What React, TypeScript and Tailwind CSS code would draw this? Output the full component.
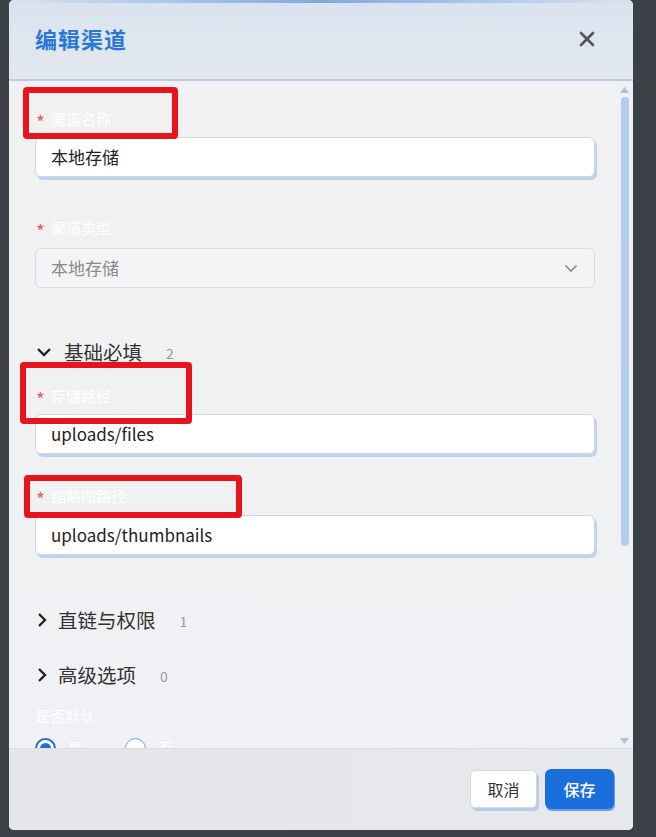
import React from 'react';

const font = { fontFamily: '"Noto Sans CJK SC", "Noto Sans", sans-serif' };

function FieldLabel({ text, className = '' }: { text: string; className?: string }) {
  return (
    <div className={`flex items-center h-[22px] pl-[1px] ${className}`}>
      <span className="text-[#f2555a] text-[19px] leading-none mt-[7px] mr-[6px]">*</span>
      <span className="text-white text-[15px] leading-none">{text}</span>
    </div>
  );
}

function TextInput({ value, className = '' }: { value: string; className?: string }) {
  return (
    <div
      className={`h-[40px] w-[560px] flex items-center pl-[15px] bg-white border border-[#d3d6db] rounded-[6px] shadow-[2px_3px_0_#bcd2ee] text-[17px] text-[#222] ${className}`}
    >
      {value}
    </div>
  );
}

function Section({ title, count, open, className = '' }: { title: string; count: number; open?: boolean; className?: string }) {
  return (
    <div className={`flex items-center h-[24px] pl-[1px] ${className}`}>
      {open ? (
        <svg width="16" height="12" viewBox="0 0 16 12" className="mr-[12px]">
          <path d="M2 3 L8 9 L14 3" fill="none" stroke="#222" strokeWidth="2.4" />
        </svg>
      ) : (
        <svg width="12" height="16" viewBox="0 0 12 16" className="mr-[10px]">
          <path d="M3 2 L9 8 L3 14" fill="none" stroke="#222" strokeWidth="2.4" />
        </svg>
      )}
      <span className="text-[19.5px] text-[#333]">{title}</span>
      <span className="text-[14px] text-[#9a9a9a] ml-[24px] mt-[2px]">{count}</span>
    </div>
  );
}

export default function App() {
  return (
    <div className="relative w-[656px] h-[837px] bg-[#3c4047] overflow-hidden" style={font}>
      <div className="ml-[9px] w-[624px] h-[830px] flex flex-col rounded-[5px] overflow-hidden bg-[#f1f2f4]">
        {/* Header */}
        <div className="relative h-[81px] shrink-0 flex items-center justify-between pl-[26px] pr-[38px] pb-[2px] bg-gradient-to-b from-[#d9e3ef] to-[#e4e8ee] border-b-[2px] border-[#b4cdec]">
          <div className="absolute top-0 left-0 right-0 h-[3px] bg-gradient-to-r from-transparent via-[#7eaae0] to-transparent" />
          <span className="text-[22px] font-bold text-[#2a78d6] tracking-[1px]">编辑渠道</span>
          <svg width="16" height="16" viewBox="0 0 16 16">
            <path d="M2 2 L14 14 M14 2 L2 14" stroke="#555" strokeWidth="2.6" strokeLinecap="round" />
          </svg>
        </div>

        {/* Body */}
        <div className="flex-1 flex min-h-0 bg-gradient-to-b from-[#f1f1f2] to-[#f0f1f4]">
          <div className="flex-1 overflow-hidden pl-[26px] pt-[26px]">
            <FieldLabel text="渠道名称" />
            <TextInput value="本地存储" className="mt-[8px]" />

            <FieldLabel text="渠道类型" className="mt-[39px]" />
            <div className="mt-[10px] h-[40px] w-[560px] flex items-center justify-between pl-[15px] pr-[16px] bg-[#f3f4f6] border border-[#dadbde] rounded-[6px] text-[17px] text-[#8a8a8a]">
              <span>本地存储</span>
              <svg width="14" height="9" viewBox="0 0 14 9">
                <path d="M1.5 1.5 L7 7 L12.5 1.5" fill="none" stroke="#8f8f8f" strokeWidth="1.6" />
              </svg>
            </div>

            <Section title="基础必填" count={2} open className="mt-[52px]" />
            <FieldLabel text="存储路径" className="mt-[20px]" />
            <TextInput value="uploads/files" className="mt-[8px]" />

            <FieldLabel text="缩略图路径" className="mt-[30px]" />
            <TextInput value="uploads/thumbnails" className="mt-[9px]" />

            <Section title="直链与权限" count={1} className="mt-[53px]" />
            <Section title="高级选项" count={0} className="mt-[31px]" />

            <div className="mt-[18px] h-[22px] flex items-center text-white text-[15px]">是否默认</div>
            <div className="mt-[10px] flex items-center">
              <span className="w-[21px] h-[21px] rounded-full border-[2px] border-[#1f6fd6] bg-white flex items-center justify-center">
                <span className="w-[11px] h-[11px] rounded-full bg-[#1f6fd6]" />
              </span>
              <span className="ml-[12px] text-white text-[15px]">是</span>
              <span className="ml-[42px] w-[21px] h-[21px] rounded-full border border-[#6d9fdd] bg-white" />
              <span className="ml-[12px] text-white text-[15px]">否</span>
            </div>
          </div>

          {/* Scrollbar */}
          <div className="w-[13px] shrink-0 flex flex-col items-center pt-[6px] pb-[4px] mr-[2px]">
            <svg width="9" height="6" viewBox="0 0 9 6">
              <path d="M0 6 L4.5 0 L9 6 Z" fill="#a9c3e6" />
            </svg>
            <div className="mt-[4px] w-[8px] h-[449px] rounded-[4px] bg-[#b2cced]" />
            <div className="flex-1" />
            <svg width="9" height="6" viewBox="0 0 9 6">
              <path d="M0 0 L4.5 6 L9 0 Z" fill="#a9c3e6" />
            </svg>
          </div>
        </div>

        {/* Footer */}
        <div className="h-[82px] shrink-0 flex items-center justify-end gap-[8px] pr-[19px] pb-[2px] bg-gradient-to-r from-[#e5e6e9] to-[#e7e8eb] border-t border-[#dcdde0]">
          <button className="h-[38px] w-[67px] rounded-[5px] bg-white border border-[#d4d7dc] shadow-[2px_3px_0_#b7cbe8] text-[16px] text-[#333]">
            取消
          </button>
          <button className="h-[40px] w-[69px] rounded-[6px] bg-[#1a6fdc] shadow-[1px_2px_0_#6f9edc] text-[16px] text-white font-medium">
            保存
          </button>
        </div>
      </div>

      {/* Red annotation boxes */}
      <div className="absolute left-[23px] top-[87px] w-[155px] h-[52px] border-[6px] border-[#e8141c] rounded-[4px]" />
      <div className="absolute left-[20px] top-[362px] w-[172px] h-[62px] border-[6px] border-[#e8141c] rounded-[4px]" />
      <div className="absolute left-[24px] top-[475px] w-[218px] h-[43px] border-[6px] border-[#e8141c] rounded-[4px]" />
    </div>
  );
}
